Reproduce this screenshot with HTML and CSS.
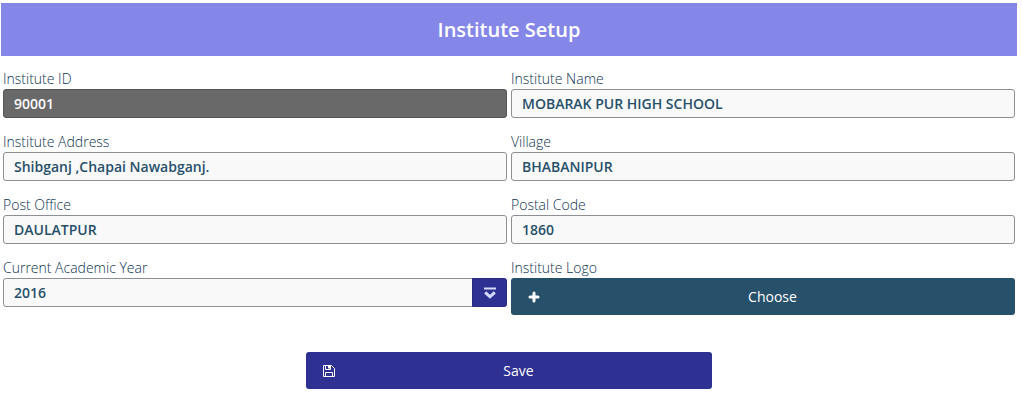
FILE: index.html
```html
<!DOCTYPE html>
<html lang="en">
<head>
<meta charset="utf-8">
<title>Institute Setup</title>
<link rel="stylesheet" href="styles.css">
</head>
<body>
<main class="page">
  <h1 class="banner">Institute Setup</h1>
  <form class="form">
    <div class="grid">
      <div class="field">
        <label class="label" for="institute-id">Institute ID</label>
        <input class="control control-locked" id="institute-id" type="text" value="90001" readonly>
      </div>
      <div class="field">
        <label class="label" for="institute-name">Institute Name</label>
        <input class="control" id="institute-name" type="text" value="MOBARAK PUR HIGH SCHOOL">
      </div>
      <div class="field">
        <label class="label" for="address">Institute Address</label>
        <input class="control" id="address" type="text" value="Shibganj ,Chapai Nawabganj.">
      </div>
      <div class="field">
        <label class="label" for="village">Village</label>
        <input class="control" id="village" type="text" value="BHABANIPUR">
      </div>
      <div class="field">
        <label class="label" for="post-office">Post Office</label>
        <input class="control" id="post-office" type="text" value="DAULATPUR">
      </div>
      <div class="field">
        <label class="label" for="postal-code">Postal Code</label>
        <input class="control" id="postal-code" type="text" value="1860">
      </div>
      <div class="field">
        <label class="label" for="year">Current Academic Year</label>
        <div class="select-wrap">
          <select class="control" id="year"><option>2016</option></select>
          <span class="select-trigger" aria-hidden="true">
            <svg width="12" height="12" viewBox="0 0 12 12" fill="none" stroke="currentColor"><path d="M0 1.5h12" stroke-width="2"/><path d="M1.2 5.4 6 9.8 10.8 5.4" stroke-width="3"/></svg>
          </span>
        </div>
      </div>
      <div class="field">
        <label class="label" for="logo">Institute Logo</label>
        <button class="button button-choose" id="logo" type="button">
          <svg class="button-icon" width="16" height="16" viewBox="0 0 16 16" fill="none" stroke="currentColor" stroke-width="3" stroke-linecap="round" aria-hidden="true"><path d="M8 4v8M4 8h8"/></svg>
          <span class="button-text">Choose</span>
        </button>
      </div>
    </div>
    <button class="button button-save" type="submit">
      <svg class="button-icon" width="16" height="16" viewBox="0 0 16 16" fill="none" stroke="currentColor" aria-hidden="true"><path d="M2.5 2.5h8l3 3v8h-11z"/><path d="M4.5 13.5v-4h7v4M4.5 2.5v4h5v-4"/><path d="M8 2.5v3" stroke-width="2"/></svg>
      <span class="button-text">Save</span>
    </button>
  </form>
</main>
</body>
</html>
```
FILE: styles.css
```css
* {
  box-sizing: border-box;
}

body {
  margin: 0;
  background: #fff;
  color: #1f4660;
  font-family: "Open Sans", "Noto Sans", sans-serif;
  font-size: 14px;
  line-height: 20px;
}

.page {
  padding: 3px 5px 20px 1px;
}

.banner {
  margin: 0;
  padding: 13px 0;
  background: #8587e8;
  color: #fff;
  font-size: 20px;
  font-weight: 600;
  line-height: 27px;
  text-align: center;
}

.form {
  display: flex;
  flex-direction: column;
  align-items: center;
  gap: 37px;
  padding-top: 13px;
}

.grid {
  display: grid;
  grid-template-columns: 1fr 1fr;
  gap: 14px 4px;
  width: 100%;
  padding: 0 2px;
}

.field {
  display: flex;
  flex-direction: column;
}

.label {
  color: #0d3450;
  font-weight: 300;
}

.control {
  width: 100%;
  height: 29px;
  margin: 0;
  padding: 0 10px;
  border: 1px solid #8e8e93;
  border-radius: 3px;
  background: #f9f9f9;
  color: #27506a;
  font: inherit;
  font-weight: 600;
  appearance: none;
}

.control-locked {
  border-color: #555;
  background: #696969;
  color: #fff;
}

.select-wrap {
  position: relative;
}

.select-wrap .control {
  display: block;
}

.select-trigger {
  position: absolute;
  top: 0;
  right: 0;
  bottom: 0;
  display: flex;
  align-items: center;
  justify-content: center;
  width: 35px;
  border: 1px solid #2a2b80;
  border-radius: 0 3px 3px 0;
  background: #2e3092;
  color: #d5dcff;
  pointer-events: none;
}

.button {
  display: flex;
  align-items: center;
  height: 37px;
  margin: 0;
  padding: 0 12px 0 15px;
  border: 0;
  border-radius: 3px;
  color: #fff;
  font: inherit;
}

.button-icon {
  flex: none;
}

.button-text {
  flex: 1;
  text-align: center;
}

.button-choose {
  width: 100%;
  background: #27506a;
}

.button-save {
  width: 40%;
  background: #2e3092;
}
```
